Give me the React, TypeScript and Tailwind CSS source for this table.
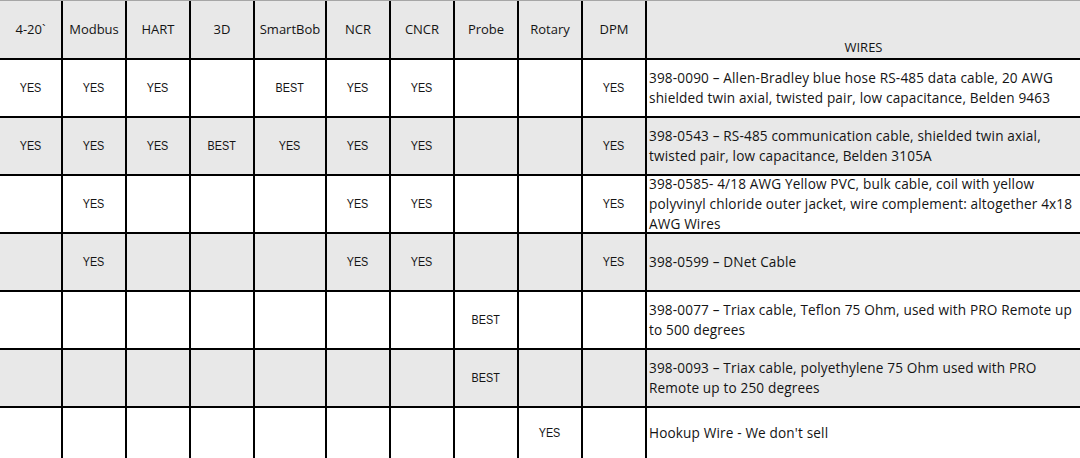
import React from "react";

const headers = ["4-20`", "Modbus", "HART", "3D", "SmartBob", "NCR", "CNCR", "Probe", "Rotary", "DPM"];
const widths = ["w-[63px]", "w-[64px]", "w-[64px]", "w-[64px]", "w-[72px]", "w-[64px]", "w-[64px]", "w-[64px]", "w-[64px]", "w-[64px]"];

type Row = { cells: string[]; wires: string[] };

const rows: Row[] = [
  {
    cells: ["YES", "YES", "YES", "", "BEST", "YES", "YES", "", "", "YES"],
    wires: [
      "398-0090 – Allen-Bradley blue hose RS-485 data cable, 20 AWG",
      "shielded twin axial, twisted pair, low capacitance, Belden 9463",
    ],
  },
  {
    cells: ["YES", "YES", "YES", "BEST", "YES", "YES", "YES", "", "", "YES"],
    wires: [
      "398-0543 – RS-485 communication cable, shielded twin axial,",
      "twisted pair, low capacitance, Belden 3105A",
    ],
  },
  {
    cells: ["", "YES", "", "", "", "YES", "YES", "", "", "YES"],
    wires: [
      "398-0585- 4/18 AWG Yellow PVC, bulk cable, coil with yellow",
      "polyvinyl chloride outer jacket, wire complement: altogether 4x18",
      "AWG Wires",
    ],
  },
  {
    cells: ["", "YES", "", "", "", "YES", "YES", "", "", "YES"],
    wires: ["398-0599 – DNet Cable"],
  },
  {
    cells: ["", "", "", "", "", "", "", "BEST", "", ""],
    wires: ["398-0077 – Triax cable, Teflon 75 Ohm, used with PRO Remote up", "to 500 degrees"],
  },
  {
    cells: ["", "", "", "", "", "", "", "BEST", "", ""],
    wires: ["398-0093 – Triax cable, polyethylene 75 Ohm used with PRO", "Remote up to 250 degrees"],
  },
  {
    cells: ["", "", "", "", "", "", "", "", "YES", ""],
    wires: ["Hookup Wire - We don't sell"],
  },
];

export default function App() {
  return (
    <div className="w-[1080px] h-[458px] overflow-hidden bg-white text-[#141414] font-['Open_Sans',sans-serif]">
      <div className="border-t border-[#a6a6a6]">
        <div className="flex h-[59px] bg-[#e8e8e8] border-b-2 border-black">
          {headers.map((h, i) => (
            <div
              key={h}
              className={`${widths[i]} shrink-0 border-r-2 border-black flex items-center justify-center text-[13px] whitespace-nowrap`}
            >
              {h}
            </div>
          ))}
          <div className="flex-1 flex items-end justify-center pb-[1px] text-[13px]">WIRES</div>
        </div>
        {rows.map((r, ri) => (
          <div
            key={ri}
            className={`flex ${ri === rows.length - 1 ? "h-[50px]" : "h-[58px] border-b-2 border-black"} ${
              ri % 2 === 1 ? "bg-[#e8e8e8]" : "bg-white"
            }`}
          >
            {r.cells.map((c, i) => (
              <div
                key={i}
                className={`${widths[i]} shrink-0 border-r-2 border-black flex items-center justify-center`}
              >
                {c && (
                  <span className="inline-block text-[13.5px] font-['Liberation_Sans',sans-serif] scale-x-80">{c}</span>
                )}
              </div>
            ))}
            <div className="flex-1 flex flex-col justify-center pl-[2px] text-[13.6px] tracking-[0.15px] leading-[20px] whitespace-nowrap">
              {r.wires.map((w, wi) => (
                <div key={wi}>{w}</div>
              ))}
            </div>
          </div>
        ))}
      </div>
    </div>
  );
}
